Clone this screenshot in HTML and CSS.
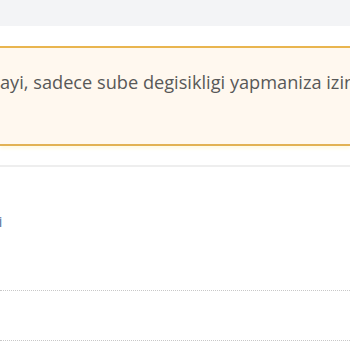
FILE: index.html
```html
<!DOCTYPE html>
<html>
<head>
<meta charset="utf-8">
<link rel="stylesheet" href="styles.css">
</head>
<body>
<div class="topbar"></div>
<div class="gap"></div>
<div class="alert">
  <p class="alert-text">ayi, sadece sube degisikligi yapmaniza izin verilmektedir.</p>
</div>
<div class="section">
  <div class="row first"><a class="link">Bayi</a></div>
  <div class="row dotted"></div>
  <div class="row dotted"></div>
</div>
</body>
</html>
```
FILE: styles.css
```css
html, body {
  margin: 0;
  padding: 0;
  background: #ffffff;
  overflow: hidden;
  font-family: "Open Sans", "Liberation Sans", sans-serif;
}
.topbar {
  height: 26px;
  background: #f3f4f6;
}
.gap {
  height: 20px;
  background: #ffffff;
}
.alert {
  height: 96px;
  background: #fff8ef;
  border-top: 2px solid #e9b54f;
  border-bottom: 2px solid #e2b255;
  box-shadow: 0 3px 3px #fffbe8;
  overflow: hidden;
}
.alert-text {
  margin: 0;
  padding-top: 21px;
  font-size: 18.2px;
  line-height: 26px;
  color: #585858;
  white-space: nowrap;
}
.section {
  margin-top: 19px;
  border-top: 2px solid #eeeeee;
}
.row.first {
  height: 109px;
  padding-bottom: 14px;
  display: flex;
  align-items: center;
  overflow: hidden;
}
.link {
  font-size: 14px;
  color: #4a6f98;
  margin-left: -25px;
  white-space: nowrap;
}
.row.dotted {
  height: 49px;
  border-top: 1px dotted #c8c8c8;
}
```
